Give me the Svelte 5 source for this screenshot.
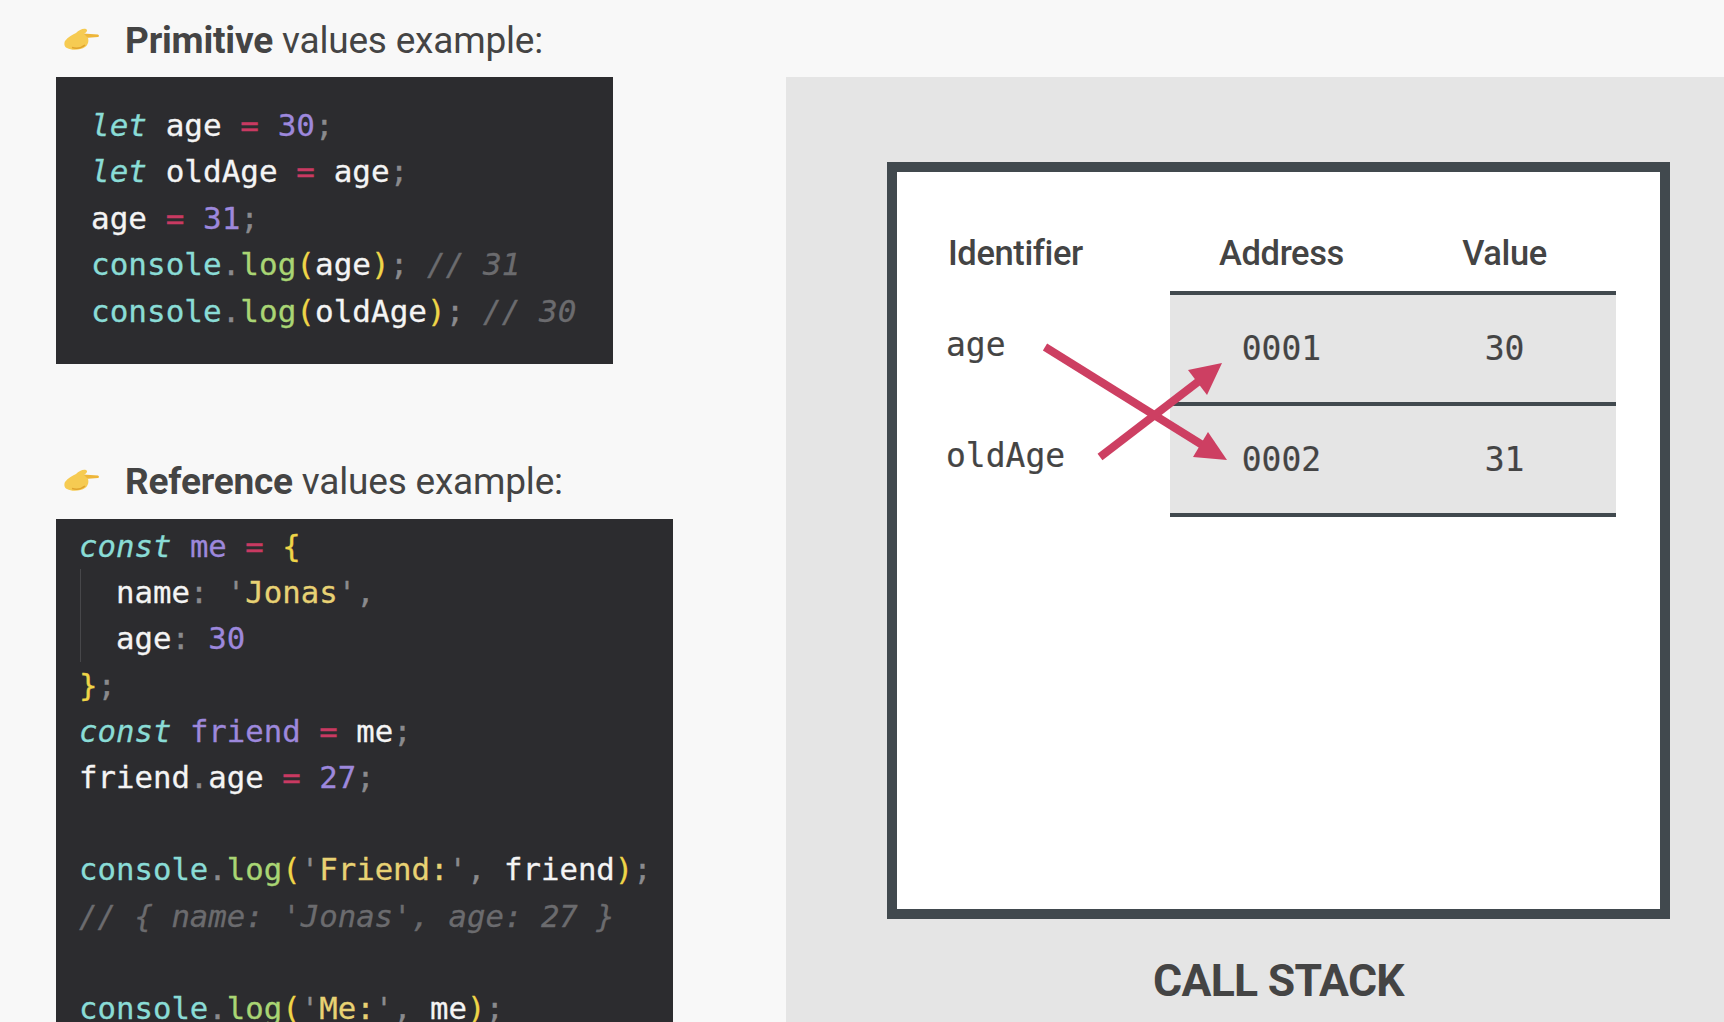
<script>
	const ageLines = [
		[["kw", "let"], ["w", " age "], ["op", "="], ["w", " "], ["num", "30"], ["p", ";"]],
		[["kw", "let"], ["w", " oldAge "], ["op", "="], ["w", " age"], ["p", ";"]],
		[["w", "age "], ["op", "="], ["w", " "], ["num", "31"], ["p", ";"]],
		[["obj", "console"], ["p", "."], ["fn", "log"], ["br", "("], ["w", "age"], ["br", ")"], ["p", "; "], ["cm", "// 31"]],
		[["obj", "console"], ["p", "."], ["fn", "log"], ["br", "("], ["w", "oldAge"], ["br", ")"], ["p", "; "], ["cm", "// 30"]]
	];

	const refLines = [
		[["kw", "const"], ["w", " "], ["num", "me"], ["w", " "], ["op", "="], ["w", " "], ["br", "{"]],
		[["w", "  name"], ["p", ": '"], ["str", "Jonas"], ["p", "',"]],
		[["w", "  age"], ["p", ": "], ["num", "30"]],
		[["br", "}"], ["p", ";"]],
		[["kw", "const"], ["w", " "], ["num", "friend"], ["w", " "], ["op", "="], ["w", " me"], ["p", ";"]],
		[["w", "friend"], ["p", "."], ["w", "age "], ["op", "="], ["w", " "], ["num", "27"], ["p", ";"]],
		[],
		[["obj", "console"], ["p", "."], ["fn", "log"], ["br", "("], ["p", "'"], ["str", "Friend:"], ["p", "', "], ["w", "friend"], ["br", ")"], ["p", ";"]],
		[["cm", "// { name: 'Jonas', age: 27 }"]],
		[],
		[["obj", "console"], ["p", "."], ["fn", "log"], ["br", "("], ["p", "'"], ["str", "Me:"], ["p", "', "], ["w", "me"], ["br", ")"], ["p", ";"]]
	];

	const rows = [
		{ name: "age", address: "0001", value: "30" },
		{ name: "oldAge", address: "0002", value: "31" }
	];
</script>

{#snippet hand()}
	<svg class="hand" viewBox="0 0 36 24" aria-hidden="true">
		<path d="M19 6.5 L34 7.5 Q36 9 34 10 L21 11 Z" fill="#eeb63a" />
		<path d="M1 14 C4 10 8 8 12 6 C15 3 19 1 22 2 C24 3 23 5 20 7 L24 11 C25 14 24 18 21 20 C17 23 8 24 3 21 C0 20 0 16 1 14 Z" fill="#f6cb52" />
		<path d="M8 20.5 C13 22 18 20.5 21 18" stroke="#e0a42e" stroke-width="1.5" fill="none" />
	</svg>
{/snippet}

{#snippet code(lines)}
	{#each lines as line}
		<div class="line">{#each line as [kind, text]}<span class={kind}>{text}</span>{/each}</div>
	{/each}
{/snippet}

<div class="page">
	<section class="left">
		<h2>{@render hand()}<span><b>Primitive</b> values example:</span></h2>
		<div class="code first">{@render code(ageLines)}</div>

		<h2 class="second">{@render hand()}<span><b>Reference</b> values example:</span></h2>
		<div class="code ref">
			<i class="guide"></i>
			{@render code(refLines)}
		</div>
	</section>

	<section class="panel">
		<div class="frame">
			<div class="table">
				<div class="head name">Identifier</div>
				<div class="head">Address</div>
				<div class="head">Value</div>

				{#each rows as row}
					<div class="label">{row.name}</div>
					<div class="cell">{row.address}</div>
					<div class="cell">{row.value}</div>
				{/each}
			</div>

			<!-- arrows lie over the table, coordinates match the frame's inner box -->
			<svg class="arrows" viewBox="0 0 763 737" aria-hidden="true">
				<line x1="148" y1="175" x2="315" y2="279" />
				<line x1="203" y1="285" x2="306" y2="206" />
				<polygon points="330,288 311,260 296,285" />
				<polygon points="325,191 291,198 310,223" />
			</svg>
		</div>
		<div class="title">CALL STACK</div>
	</section>
</div>

<style>
	:global(body) {
		background: #f8f8f8;
	}

	.page {
		display: grid;
		grid-template-columns: 786px 938px;
		height: 1022px;
		overflow: hidden;
		font-family: Roboto, sans-serif;
		color: #444;
	}

	.left {
		padding-left: 56px;
		min-width: 0;
	}

	h2 {
		display: flex;
		align-items: center;
		box-sizing: border-box;
		height: 77px;
		margin: 0;
		padding: 3px 0 0 8px;
		font-size: 37px;
		font-weight: 400;
		letter-spacing: -0.2px;
	}

	h2 b {
		font-weight: 700;
	}

	.second {
		margin-top: 78px;
		padding-top: 2px;
	}

	.hand {
		width: 36px;
		height: 24px;
		margin: -3px 25px 0 0;
		flex: none;
	}

	.code {
		position: relative;
		background: #2c2c2f;
		font-family: "DejaVu Sans Mono", monospace;
		color: #f4f4f4;
		-webkit-text-stroke: 0.3px;
	}

	.first {
		width: 557px;
		height: 287px;
		box-sizing: border-box;
		padding: 25px 0 0 35px;
		font-size: 31px;
		line-height: 46.4px;
	}

	.first .line {
		height: 46.4px;
	}

	.ref {
		width: 617px;
		height: 503px;
		box-sizing: border-box;
		padding: 5px 0 0 23px;
		font-size: 30.7px;
		line-height: 46.2px;
	}

	.ref .line {
		height: 46.2px;
	}

	.guide {
		position: absolute;
		left: 24px;
		top: 50px;
		width: 1px;
		height: 93px;
		background: #47474a;
	}

	.line {
		white-space: pre;
	}

	.kw {
		color: #8adcd6;
		font-style: italic;
	}

	.obj {
		color: #8adcd6;
	}

	.fn {
		color: #a9d574;
	}

	.op {
		color: #c93a62;
	}

	.num {
		color: #9d88dc;
	}

	.p {
		color: #8a8a8d;
	}

	.br {
		color: #efd548;
	}

	.str {
		color: #e8d274;
	}

	.cm {
		color: #6b6b6e;
		font-style: italic;
	}

	.panel {
		margin-top: 77px;
		padding: 85px 0 0 101px;
		background: #e5e5e5;
	}

	.frame {
		position: relative;
		box-sizing: border-box;
		width: 783px;
		height: 757px;
		padding: 52px 44px 0 49px;
		background: #fff;
		border: 10px solid #41494e;
	}

	.table {
		display: grid;
		grid-template-columns: 224px 223px 223px;
		grid-template-rows: 71px 111px 111px;
	}

	.head {
		display: flex;
		align-items: center;
		justify-content: center;
		box-sizing: border-box;
		padding-bottom: 9px;
		font-size: 34.5px;
		font-weight: 500;
		letter-spacing: -0.4px;
		border-bottom: 4px solid #41494e;
	}

	.head.name {
		justify-content: flex-start;
		padding-left: 2px;
		border-bottom-color: transparent;
	}

	.label,
	.cell {
		display: flex;
		align-items: center;
		font-family: "DejaVu Sans Mono", monospace;
		font-size: 33px;
		-webkit-text-stroke: 0.2px;
	}

	.label {
		padding-bottom: 12px;
	}

	.cell {
		justify-content: center;
		padding-bottom: 1px;
		background: #e5e5e5;
		border-bottom: 4px solid #41494e;
	}

	.arrows {
		position: absolute;
		top: 0;
		left: 0;
		width: 763px;
		height: 737px;
	}

	.arrows line {
		stroke: #cd3f62;
		stroke-width: 8;
	}

	.arrows polygon {
		fill: #cd3f62;
	}

	.title {
		width: 783px;
		margin-top: 36px;
		text-align: center;
		font-size: 44.5px;
		font-weight: 700;
		letter-spacing: -0.7px;
	}
</style>
